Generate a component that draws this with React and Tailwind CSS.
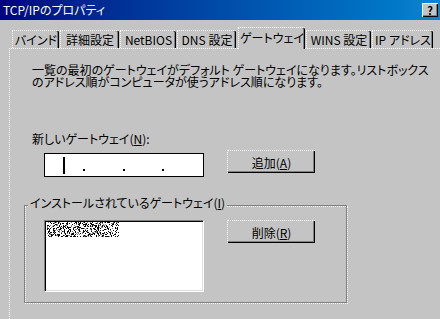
import React from "react";

const TABS = [
  { label: "バインド", cls: "w-[47px]" },
  { label: "詳細設定", cls: "w-[59px]" },
  { label: "NetBIOS", cls: "w-[56px]" },
  { label: "DNS 設定", cls: "w-[59px]" },
  { label: "ゲートウェイ", cls: "w-[67px] ml-[1px]", active: true },
  { label: "WINS 設定", cls: "w-[65px]" },
  { label: "IP アドレス", cls: "w-[61px]" },
];

// scrambled list entry (the original is pixelated)
function Noise() {
  const cells = [];
  let s = 12345;
  for (let y = 0; y < 15; y++) {
    for (let x = 0; x < 72; x++) {
      s = (Math.imul(s, 1103515245) + 12345) & 0x7fffffff;
      const r = s / 0x7fffffff;
      if (r < 0.28) cells.push(<rect key={x + "-" + y} x={x} y={y} width="1" height="1" fill="#000" />);
      else if (r < 0.42) cells.push(<rect key={x + "-" + y} x={x} y={y} width="1" height="1" fill="#808080" />);
    }
  }
  return (
    <svg width="72" height="15" shapeRendering="crispEdges">
      {cells}
    </svg>
  );
}

function Button({ children }) {
  return (
    <div className="flex h-[23px] w-[88px] items-center justify-center border-l border-t border-dotted border-white leading-[13px] shadow-[inset_-1px_-1px_#000,inset_-2px_-2px_#808080]">
      {children}
    </div>
  );
}

export default function App() {
  return (
    <div className="flex h-[319px] w-[440px] flex-col overflow-hidden bg-[#c4c4c4] font-['Noto_Sans_CJK_JP',sans-serif] text-[12px] text-black [font-feature-settings:'palt']">
      {/* title bar */}
      <div className="flex h-[20px] shrink-0 items-center justify-between bg-linear-to-r from-[#000080] to-[#1084d0] pl-[3px] pr-[2px]">
        <span className="leading-[14px] text-white">TCP/IPのプロパティ</span>
        <div className="flex h-[14px] w-[16px] items-center justify-center bg-[#c4c4c4] text-[11px] font-bold leading-none shadow-[inset_1px_1px_#fff,inset_-1px_-1px_#000,inset_-2px_-2px_#808080]">
          ?
        </div>
      </div>

      <div className="flex flex-1 flex-col pl-[9px] pt-[7px]">
        {/* tabs */}
        <div className="flex h-[21px] shrink-0 items-end gap-[1px] pl-[3px]">
          {TABS.map((t) =>
            t.active ? (
              <div
                key={t.label}
                className={`relative z-10 -mb-[1px] flex h-[22px] items-center justify-center rounded-tr-[2px] border-l border-t border-dotted border-white bg-[#c4c4c4] pb-[3px] leading-[13px] shadow-[inset_-1px_0_#000,inset_-2px_0_#808080] ${t.cls}`}
              >
                {t.label}
              </div>
            ) : (
              <div
                key={t.label}
                className={`flex h-[18px] items-center justify-center rounded-tr-[2px] border-l border-t border-dotted border-white leading-[13px] shadow-[inset_-1px_0_#000,inset_-2px_0_#808080] ${t.cls}`}
              >
                {t.label}
              </div>
            )
          )}
        </div>

        {/* panel */}
        <div className="flex flex-1 flex-col border-l border-t border-dotted border-white pl-[22px] pt-[15px]">
          <p className="leading-[12px]">
            一覧の最初のゲートウェイがデフォルト ゲートウェイになります。リストボックス
            <br />
            のアドレス順がコンピュータが使うアドレス順になります。
          </p>

          <div className="mt-[44px] leading-[13px]">
            新しいゲートウェイ(<u>N</u>):
          </div>

          <div className="mt-[5px] flex items-start">
            <div className="ml-[12px] mt-[3px] flex h-[24px] w-[160px] items-center border border-black bg-white">
              <div className="ml-[18px] h-[17px] w-[2px] bg-black" />
              <div className="ml-[18px] mt-[9px] h-[2px] w-[2px] bg-black" />
              <div className="ml-[38px] mt-[9px] h-[2px] w-[2px] bg-black" />
              <div className="ml-[37px] mt-[9px] h-[2px] w-[2px] bg-black" />
            </div>
            <div className="ml-[23px]">
              <Button>
                <span>
                  追加(<u>A</u>)
                </span>
              </Button>
            </div>
          </div>

          {/* group box */}
          <div className="relative ml-[-7px] mt-[29px] h-[98px] w-[323px] border border-dotted border-white">
            <div className="absolute -left-[2px] -top-[2px] bottom-0 right-0 border border-[#808080]" />
            <span className="absolute -top-[11px] left-[2px] bg-[#c4c4c4] px-[2px] leading-[13px]">
              インストールされているゲートウェイ(<u>I</u>)
            </span>
            <div className="relative flex items-start pl-[18px] pt-[13px]">
              <div className="h-[72px] w-[160px] border-l border-t border-r border-b border-l-[#808080] border-t-[#808080] border-r-white border-b-white bg-white shadow-[inset_1px_1px_#000,inset_-1px_-1px_#dfdfdf]">
                <div className="pl-[2px] pt-[1px]">
                  <Noise />
                </div>
              </div>
              <div className="ml-[23px]">
                <Button>
                  <span>
                    削除(<u>R</u>)
                  </span>
                </Button>
              </div>
            </div>
          </div>
        </div>
      </div>
    </div>
  );
}
